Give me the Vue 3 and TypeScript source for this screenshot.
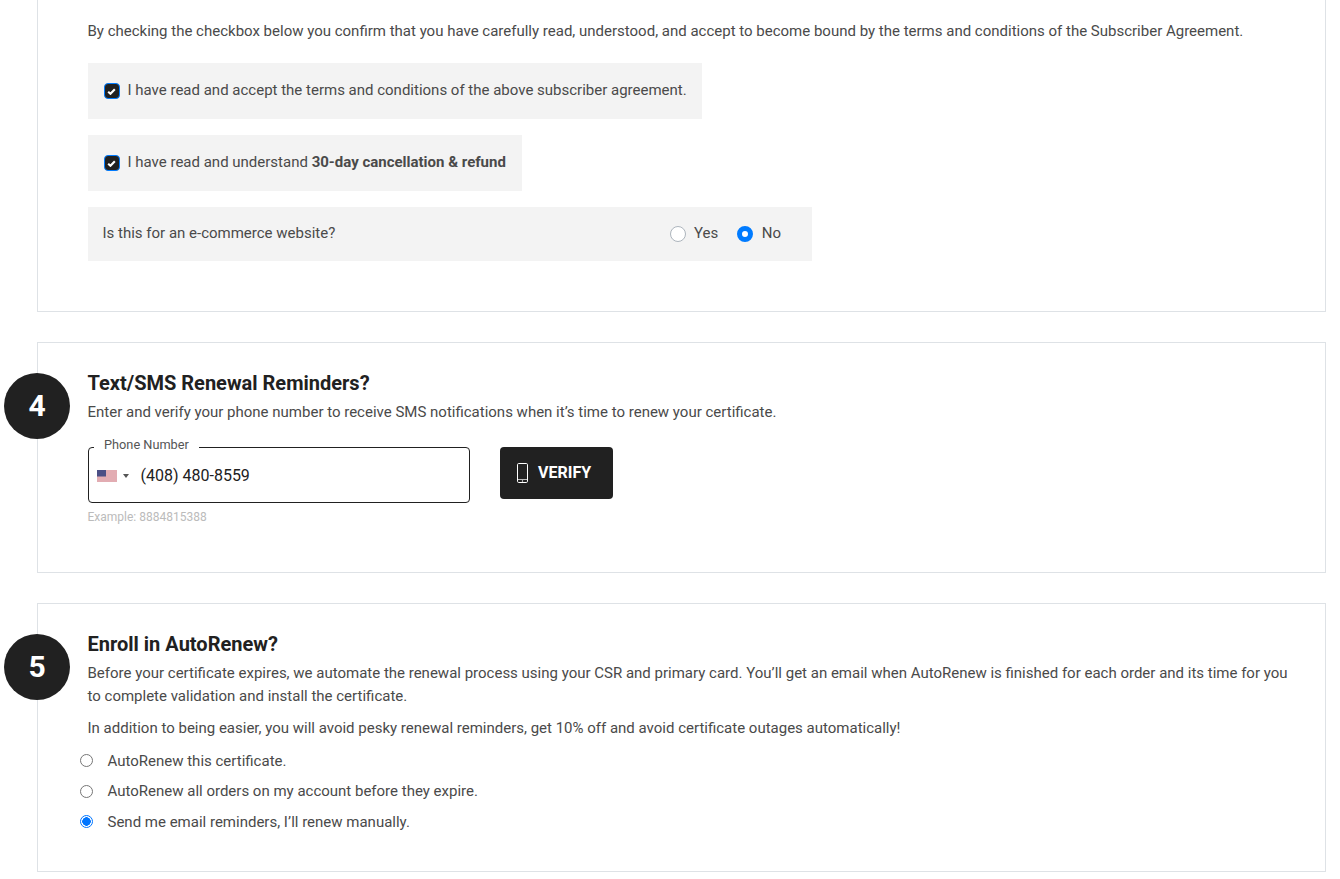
<script setup lang="ts">
const radios: { label: string; on: boolean }[] = [
  { label: 'AutoRenew this certificate.', on: false },
  { label: 'AutoRenew all orders on my account before they expire.', on: false },
  { label: 'Send me email reminders, I’ll renew manually.', on: true },
]
</script>

<template>
  <main class="page">
    <section class="card card-first">
      <p class="intro">By checking the checkbox below you confirm that you have carefully read, understood, and accept to become bound by the terms and conditions of the Subscriber Agreement.</p>
      <label class="box check-box">
        <span class="check"><svg viewBox="0 0 10 8" width="9" height="7"><path d="M1.2 4.2 3.8 6.6 8.8 1.4" fill="none" stroke="#fff" stroke-width="2.4"/></svg></span>
        <span class="raised">I have read and accept the terms and conditions of the above subscriber agreement.</span>
      </label>
      <label class="box check-box">
        <span class="check"><svg viewBox="0 0 10 8" width="9" height="7"><path d="M1.2 4.2 3.8 6.6 8.8 1.4" fill="none" stroke="#fff" stroke-width="2.4"/></svg></span>
        <span class="raised">I have read and understand <b>30-day cancellation &amp; refund</b></span>
      </label>
      <div class="box ecom">
        <span class="ecom-q raised">Is this for an e-commerce website?</span>
        <span class="ecom-opt"><i class="cr"></i><span class="raised">Yes</span></span>
        <span class="ecom-opt"><i class="cr cr-on"></i><span class="raised">No</span></span>
      </div>
    </section>

    <section class="card card-sms">
      <div class="step">4</div>
      <h2>Text/SMS Renewal Reminders?</h2>
      <p class="lead">Enter and verify your phone number to receive SMS notifications when it’s time to renew your certificate.</p>
      <div class="phone-row">
        <div class="phone-col">
          <fieldset class="phone">
            <legend>Phone Number</legend>
            <svg class="flag" viewBox="0 0 20 12" width="20" height="12">
              <rect width="20" height="12" fill="#f0e6e6"/>
              <path d="M0 1h20M0 3h20M0 5h20M0 7h20M0 9h20M0 11h20" stroke="#d4727e" stroke-width="1"/>
              <rect width="9" height="6.5" fill="#4b4f85"/>
            </svg>
            <span class="caret"></span>
            <span class="num">(408) 480-8559</span>
          </fieldset>
          <div class="example">Example: 8884815388</div>
        </div>
        <button class="verify" type="button">
          <svg viewBox="0 0 11 20" width="11" height="20"><rect x=".5" y=".5" width="10" height="19" rx="1.2" fill="none" stroke="#fff"/><path d="M1 16.5h9" stroke="#fff" stroke-width=".7"/><circle cx="5.5" cy="18" r=".7" fill="#fff"/></svg>
          <span class="raised">VERIFY</span>
        </button>
      </div>
    </section>

    <section class="card card-auto">
      <div class="step">5</div>
      <h2>Enroll in AutoRenew?</h2>
      <p class="lead tall">Before your certificate expires, we automate the renewal process using your CSR and primary card. You’ll get an email when AutoRenew is finished for each order and its time for you to complete validation and install the certificate.</p>
      <p class="lead second">In addition to being easier, you will avoid pesky renewal reminders, get 10% off and avoid certificate outages automatically!</p>
      <ul class="radios">
        <li v-for="r in radios" :key="r.label"><i class="nr" :class="{ 'nr-on': r.on }"></i>{{ r.label }}</li>
      </ul>
    </section>
  </main>
</template>

<style>
html, body { margin: 0; background: #fff; overflow: hidden; }
</style>

<style scoped>
.page {
  width: 1340px;
  height: 879px;
  overflow: hidden;
  box-sizing: border-box;
  padding-left: 37px;
  font-family: Roboto, "Liberation Sans", sans-serif;
  font-size: 15px;
  color: #4a4a4a;
}
.card {
  position: relative;
  box-sizing: border-box;
  width: 1289px;
  border: 1px solid #dee2e6;
  padding-left: 49.5px;
  padding-right: 32px;
  margin-bottom: 30px;
}
.card-first { border-top: 0; height: 312px; padding-top: 21px; }
.card-sms { height: 231px; padding-top: 28px; }
.card-auto { height: 269px; padding-top: 28px; }
p { margin: 0; }
.intro { line-height: 20px; margin-bottom: 22px; }
.box {
  display: flex;
  align-items: center;
  width: fit-content;
  background: #f3f3f3;
  box-sizing: border-box;
}
.raised { padding-bottom: 2px; }
.check-box { height: 56px; padding: 0 15.7px 0 16px; margin-bottom: 16px; gap: 8px; }
.check {
  width: 16px;
  height: 16px;
  box-sizing: border-box;
  border: 1px solid #007bff;
  border-radius: 4px;
  background: #212121;
  display: flex;
  align-items: center;
  justify-content: center;
}
b { font-weight: 700; }
.ecom { width: 724px; height: 54px; padding-left: 15px; }
.ecom-q { width: 567px; }
.ecom-opt { display: flex; align-items: center; gap: 8.5px; margin-right: 19px; }
.cr {
  width: 16px;
  height: 16px;
  box-sizing: border-box;
  border-radius: 50%;
  border: 1px solid #adb5bd;
  background: #fff;
}
.cr-on { border: 5px solid #007bff; }
h2 {
  margin: 0;
  font-size: 20px;
  font-weight: 700;
  line-height: 24px;
  color: #212121;
}
.step {
  position: absolute;
  left: -34px;
  top: 30px;
  width: 66px;
  height: 66px;
  padding-bottom: 2px;
  box-sizing: border-box;
  border-radius: 50%;
  background: #212121;
  color: #fff;
  font-size: 30px;
  font-weight: 700;
  display: flex;
  align-items: center;
  justify-content: center;
}
.lead { line-height: 24px; margin-top: 5px; }
.tall { line-height: 23.25px; margin-top: 6px; }
.second { margin-top: 8px; line-height: 23.25px; }
.phone-row { display: flex; gap: 30px; margin-top: 23px; }
.phone-col { width: 382px; }
.phone {
  display: flex;
  align-items: center;
  height: 63px;
  margin: -7px 0 0;
  padding: 0 8px 5px;
  box-sizing: border-box;
  border: 1px solid #212121;
  border-radius: 4px;
  min-width: 0;
}
legend {
  position: relative;
  top: -2px;
  font-size: 12.75px;
  line-height: 14px;
  color: #555;
  padding: 0 10px 0 10.5px;
  margin-left: -3px;
}
.flag { flex: none; }
.caret {
  margin-left: 6px;
  border-left: 3px solid transparent;
  border-right: 3px solid transparent;
  border-top: 4px solid #555;
}
.num { margin-left: 12px; font-size: 16px; color: #212121; }
.example { font-size: 12px; color: #bbb; margin-top: 7px; line-height: 14px; }
.verify {
  width: 113px;
  height: 52px;
  border: 0;
  border-radius: 4px;
  background: #212121;
  color: #fff;
  font: 700 16px Roboto, "Liberation Sans", sans-serif;
  display: flex;
  align-items: center;
  gap: 10.5px;
  padding: 0 0 0 17px;
}
.radios { list-style: none; margin: 6px 0 0 -8px; padding: 0; }
.radios li { display: flex; align-items: center; gap: 15px; height: 30.4px; }
.nr {
  width: 13px;
  height: 13px;
  box-sizing: border-box;
  border-radius: 50%;
  border: 1px solid #767676;
  background: #fff;
}
.nr-on { border-color: #0075ff; background: radial-gradient(circle, #0075ff 0 4px, #fff 4.5px); }
</style>
